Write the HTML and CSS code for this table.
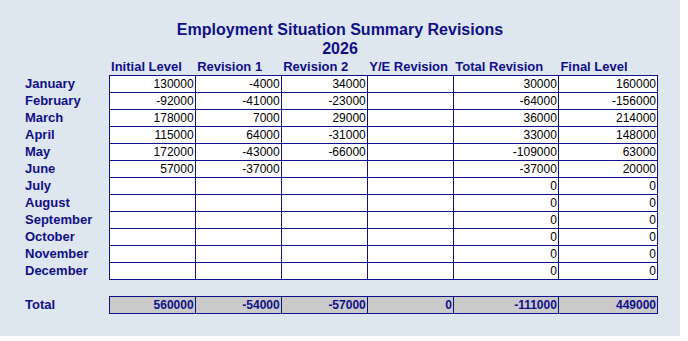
FILE: index.html
```html
<!DOCTYPE html>
<html lang="en">
<head>
    <meta charset="UTF-8">
    <meta name="viewport" content="width=device-width, initial-scale=1.0">
    <title>Employment Situation Summary Revisions</title>
    <link rel="stylesheet" href="styles.css">
</head>
<body>
    <div class="sheet">
        <h1 class="title">Employment Situation Summary Revisions<br>2026</h1>

        <table class="grid">
            <colgroup>
                <col class="col-month">
                <col class="col-std">
                <col class="col-std">
                <col class="col-std">
                <col class="col-std">
                <col class="col-total">
                <col class="col-final">
            </colgroup>
            <thead>
                <tr>
                    <th></th>
                    <th>Initial Level</th>
                    <th>Revision 1</th>
                    <th>Revision 2</th>
                    <th>Y/E Revision</th>
                    <th>Total Revision</th>
                    <th>Final Level</th>
                </tr>
            </thead>
            <tbody>
                <tr><td class="month">January</td><td>130000</td><td>-4000</td><td>34000</td><td></td><td>30000</td><td>160000</td></tr>
                <tr><td class="month">February</td><td>-92000</td><td>-41000</td><td>-23000</td><td></td><td>-64000</td><td>-156000</td></tr>
                <tr><td class="month">March</td><td>178000</td><td>7000</td><td>29000</td><td></td><td>36000</td><td>214000</td></tr>
                <tr><td class="month">April</td><td>115000</td><td>64000</td><td>-31000</td><td></td><td>33000</td><td>148000</td></tr>
                <tr><td class="month">May</td><td>172000</td><td>-43000</td><td>-66000</td><td></td><td>-109000</td><td>63000</td></tr>
                <tr><td class="month">June</td><td>57000</td><td>-37000</td><td></td><td></td><td>-37000</td><td>20000</td></tr>
                <tr><td class="month">July</td><td></td><td></td><td></td><td></td><td>0</td><td>0</td></tr>
                <tr><td class="month">August</td><td></td><td></td><td></td><td></td><td>0</td><td>0</td></tr>
                <tr><td class="month">September</td><td></td><td></td><td></td><td></td><td>0</td><td>0</td></tr>
                <tr><td class="month">October</td><td></td><td></td><td></td><td></td><td>0</td><td>0</td></tr>
                <tr><td class="month">November</td><td></td><td></td><td></td><td></td><td>0</td><td>0</td></tr>
                <tr><td class="month">December</td><td></td><td></td><td></td><td></td><td>0</td><td>0</td></tr>
                <tr class="spacer"><td colspan="7"></td></tr>
                <tr class="total"><td class="month">Total</td><td>560000</td><td>-54000</td><td>-57000</td><td>0</td><td>-111000</td><td>449000</td></tr>
            </tbody>
        </table>
    </div>
</body>
</html>
```

FILE: styles.css
```css
* {
    box-sizing: border-box;
}
body {
    margin: 0;
    background: #fff;
    font-family: "Liberation Sans", Arial, sans-serif;
}
.sheet {
    width: 680px;
    height: 336px;
    background: #dee6ef;
    padding: 20px 0 0 25px;
}
.title {
    width: 630px;
    margin: 0;
    text-align: center;
    font-size: 16px;
    line-height: 19px;
    font-weight: bold;
    color: #10108a;
}
.grid {
    border-collapse: collapse;
    table-layout: fixed;
    width: 633px;
}
.col-month {
    width: 84px;
}
.col-std {
    width: 86px;
}
.col-total {
    width: 105px;
}
.col-final {
    width: 99px;
}
.grid th {
    height: 17px;
    padding: 0 0 1px 2px;
    text-align: left;
    vertical-align: bottom;
    font-size: 13px;
    line-height: 15px;
    color: #10108a;
    white-space: nowrap;
}
.grid td {
    height: 17px;
    padding: 0 1px 1px 0;
    border: 1px solid #10108a;
    background: #fff;
    text-align: right;
    vertical-align: bottom;
    font-size: 12px;
    line-height: 14px;
    color: #000;
}
.grid td.month {
    border: none;
    background: transparent;
    text-align: left;
    font-size: 13px;
    font-weight: bold;
    color: #10108a;
}
.grid .spacer td {
    border: none;
    background: transparent;
}
.grid .total td {
    background: #cacaca;
    font-weight: bold;
    color: #10108a;
}
.grid .total td.month {
    background: transparent;
}
```
